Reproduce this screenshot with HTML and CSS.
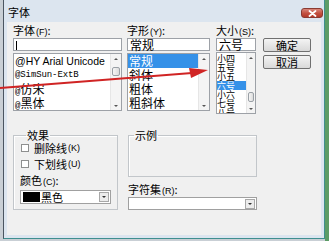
FILE: index.html
```html
<!DOCTYPE html>
<html lang="zh-CN">
<head>
  <meta charset="UTF-8">
  <title>字体</title>
  <link rel="stylesheet" href="styles.css">
</head>
<body>
  <div class="desk">
    <div class="window">
      <div class="titlebar">
        <span class="title">字体</span>
        <span class="close">
          <svg width="9" height="7" viewBox="0 0 9 7">
            <path d="M1.5 1 L7.5 6 M7.5 1 L1.5 6" stroke="#fff" stroke-width="1.8" stroke-linecap="round"/>
          </svg>
        </span>
      </div>

      <div class="client">
        <div class="top">
          <div class="col col-font">
            <div class="label">字体<span class="key">(F)</span>:</div>
            <div class="input"><span class="caret"></span></div>
            <div class="list">
              <div class="items">
                <div class="item latin">@HY Arial Unicode</div>
                <div class="item mono">@SimSun-ExtB</div>
                <div class="item"><span class="at">@</span>仿宋</div>
                <div class="item"><span class="at">@</span>黑体</div>
              </div>
              <div class="vscroll">
                <span class="arr up"></span>
                <span class="track"><span class="thumb thumb-font"></span></span>
                <span class="arr down"></span>
              </div>
            </div>
          </div>

          <div class="col col-style">
            <div class="label">字形<span class="key">(Y)</span>:</div>
            <div class="input">常规</div>
            <div class="list">
              <div class="items">
                <div class="item selected">常规</div>
                <div class="item">斜体</div>
                <div class="item">粗体</div>
                <div class="item">粗斜体</div>
              </div>
              <div class="vscroll">
                <span class="arr up"></span>
                <span class="track"></span>
                <span class="arr down"></span>
              </div>
            </div>
          </div>

          <div class="col col-size">
            <div class="label">大小<span class="key">(S)</span>:</div>
            <div class="input">六号</div>
            <div class="list list-size">
              <div class="items tight">
                <div class="item">小四</div>
                <div class="item">五号</div>
                <div class="item">小五</div>
                <div class="item selected">六号</div>
                <div class="item">小六</div>
                <div class="item">七号</div>
                <div class="item">八号</div>
              </div>
              <div class="vscroll narrow">
                <span class="arr up"></span>
                <span class="track"><span class="thumb thumb-size"></span></span>
                <span class="arr down"></span>
              </div>
            </div>
          </div>

          <div class="buttons">
            <button class="btn">确定</button>
            <button class="btn">取消</button>
          </div>
        </div>

        <div class="bottom">
          <fieldset class="group effects">
            <legend>效果</legend>
            <div class="check"><span class="box"></span>删除线<span class="key">(K)</span></div>
            <div class="check"><span class="box"></span>下划线<span class="key">(U)</span></div>
            <div class="label">颜色<span class="key">(C)</span>:</div>
            <div class="combo color-combo">
              <span class="swatch"></span>
              <span class="value">黑色</span>
              <span class="drop"></span>
            </div>
          </fieldset>

          <div class="col-right">
            <fieldset class="group sample">
              <legend>示例</legend>
            </fieldset>
            <div class="label">字符集<span class="key">(R)</span>:</div>
            <div class="combo charset-combo">
              <span class="value"></span>
              <span class="drop"></span>
            </div>
          </div>
        </div>
      </div>
    </div>
    <div class="edge"></div>

    <svg class="arrow" width="329" height="241" viewBox="0 0 329 241">
      <line x1="0" y1="88" x2="192" y2="73" stroke="#d02424" stroke-width="2"/>
      <polygon points="208,70 189,68 191,78" fill="#d02424"/>
    </svg>
  </div>
</body>
</html>
```

FILE: styles.css
```css
* {
  box-sizing: border-box;
  margin: 0;
  padding: 0;
}
body {
  font-family: "Noto Sans CJK SC", "Liberation Sans", sans-serif;
  font-size: 11px;
  color: #000;
  background: #2b3a44;
}
.desk {
  position: relative;
  width: 329px;
  height: 241px;
  overflow: hidden;
  display: flex;
  background: #c9cfd5;
  padding-left: 3px;
}
.window {
  width: 322px;
  height: 239px;
  background: #dce5ef;
  border-left: 1px solid #4b5560;
  border-right: 1px solid #3f8f8f;
  border-bottom: 1px solid #3f8f8f;
  padding: 0 3px 3px 3px;
  display: flex;
  flex-direction: column;
}
.edge {
  width: 4px;
  height: 241px;
  background: #5c9c66;
}

/* title bar */
.titlebar {
  height: 22px;
  display: flex;
  align-items: flex-start;
}
.title {
  padding: 5px 0 0 1px;
  line-height: 14px;
  font-size: 11px;
}
.close {
  margin-left: auto;
  margin-top: 8px;
  margin-right: -2px;
  width: 22px;
  height: 10px;
  border-radius: 3px;
  border: 1px solid #8a3b32;
  background: linear-gradient(#d98579, #c24f3f 55%, #b2392a);
  display: flex;
  align-items: center;
  justify-content: center;
}

/* client area */
.client {
  flex: 1;
  background: #f0f0f0;
  padding: 1px 0 0 6px;
}
.top {
  display: flex;
}
.label {
  line-height: 14px;
  height: 14px;
  white-space: nowrap;
}
.key {
  font-family: "Liberation Sans", sans-serif;
  font-size: 9px;
  margin-left: 1px;
}
.col-font { width: 109px; }
.col-style { width: 83px; margin-left: 5px; }
.col-size { width: 40px; margin-left: 6px; }
.buttons {
  width: 48px;
  margin-left: 7px;
  padding-top: 15px;
  display: flex;
  flex-direction: column;
  gap: 3px;
}
.input {
  margin-top: 1px;
  height: 13px;
  background: #fff;
  border: 1px solid #9da1a7;
  line-height: 11px;
  padding-left: 2px;
  font-size: 12px;
}
.caret {
  display: inline-block;
  width: 1px;
  height: 9px;
  margin-top: 1px;
  background: #000;
}
.list {
  margin-top: 2px;
  height: 58px;
  background: #fff;
  border: 1px solid #9da1a7;
  display: flex;
  overflow: hidden;
}
.list-size {
  margin-top: 1px;
  height: 62px;
}
.items {
  flex: 1;
  overflow: hidden;
}
.item {
  height: 14px;
  line-height: 14px;
  padding-left: 1px;
  font-size: 12px;
  white-space: nowrap;
}
.item.latin {
  font-family: "Liberation Sans", sans-serif;
  font-size: 10.5px;
}
.item.mono {
  font-family: "Liberation Mono", monospace;
  font-size: 9px;
  letter-spacing: -0.1px;
}
.at {
  font-family: "Liberation Mono", monospace;
  font-size: 9px;
}
.item.selected {
  background: #3591e8;
  color: #fff;
}
.tight {
  padding-top: 1px;
}
.tight .item {
  height: 9px;
  line-height: 9px;
  font-size: 9px;
  padding-left: 0;
}

/* scrollbars */
.vscroll {
  width: 11px;
  background: #f4f4f4;
  border-left: 1px solid #e6e6e6;
  display: flex;
  flex-direction: column;
}
.vscroll.narrow { width: 9px; }
.arr {
  height: 9px;
  display: flex;
  align-items: center;
  justify-content: center;
}
.arr::before {
  content: "";
  border-left: 2px solid transparent;
  border-right: 2px solid transparent;
}
.arr.up::before { border-bottom: 2px solid #555; }
.arr.down::before { border-top: 2px solid #555; }
.track {
  flex: 1;
  display: flex;
  flex-direction: column;
}
.thumb {
  display: block;
  margin: 0 1px;
  border: 1px solid #9aa0a6;
  border-radius: 2px;
  background: linear-gradient(90deg, #f6f6f6, #dcdcdc);
}
.thumb-font { margin-top: 4px; height: 9px; }
.thumb-size { margin-top: 30px; height: 10px; }

/* buttons */
.btn {
  height: 14px;
  border: 1px solid #707070;
  border-radius: 2px;
  background: linear-gradient(#f4f4f4, #e6e6e6 50%, #d9d9d9);
  font-family: inherit;
  font-size: 11px;
  line-height: 12px;
  color: #000;
}

/* lower part */
.bottom {
  display: flex;
  margin-top: 15px;
}
.group {
  border: 1px solid #c2c6ca;
  box-shadow: inset 1px 1px 0 #fff;
  min-width: 0;
}
.group legend {
  margin-left: 5px;
  padding: 0 1px;
  line-height: 12px;
  font-size: 11px;
}
.effects {
  width: 105px;
  height: 81px;
  padding: 0 0 0 7px;
}
.check {
  display: flex;
  align-items: center;
  height: 14px;
  margin-bottom: 2px;
  white-space: nowrap;
}
.box {
  width: 8px;
  height: 8px;
  border: 1px solid #8e8f8f;
  background: #fff;
  margin-right: 5px;
}
.effects .label {
  margin-left: -1px;
}
.combo {
  height: 14px;
  background: #fff;
  border: 1px solid #a0a0a0;
  display: flex;
  align-items: center;
  padding: 1px;
}
.color-combo {
  margin: 3px 0 0 -1px;
  width: 91px;
}
.swatch {
  width: 17px;
  height: 10px;
  background: #000;
  margin-left: 1px;
}
.value {
  flex: 1;
  padding-left: 1px;
  font-size: 11px;
  line-height: 12px;
}
.drop {
  width: 10px;
  height: 10px;
  background: #ececec;
  border: 1px solid #a8a8a8;
  display: flex;
  align-items: center;
  justify-content: center;
}
.drop::before {
  content: "";
  border-left: 2px solid transparent;
  border-right: 2px solid transparent;
  border-top: 2px solid #333;
}
.col-right {
  width: 129px;
  margin-left: 10px;
}
.sample {
  height: 48px;
}
.col-right .label {
  margin-top: 5px;
}
.charset-combo {
  margin-top: 1px;
  height: 13px;
}

/* annotation arrow */
.arrow {
  position: absolute;
  left: 0;
  top: 0;
  pointer-events: none;
}
```
